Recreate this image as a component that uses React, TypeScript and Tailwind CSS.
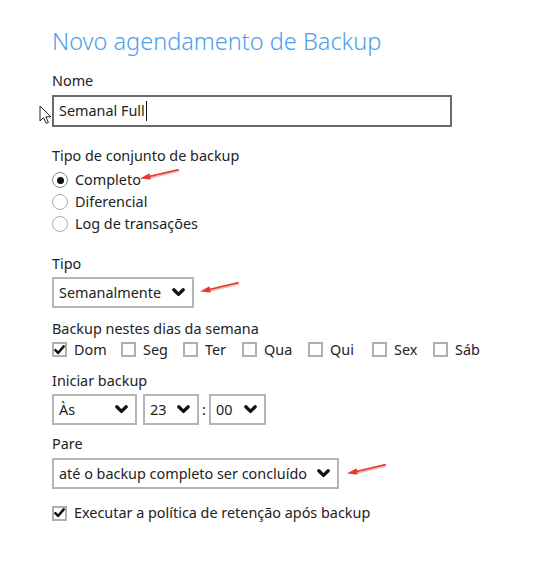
import { useState } from "react";

function Chevron() {
  return (
    <svg width="13" height="9" viewBox="0 0 13 9" className="shrink-0">
      <path d="M1.8 1.8 L6.5 6.4 L11.2 1.8" fill="none" stroke="#111" strokeWidth="3.3" strokeLinecap="round" strokeLinejoin="round" />
    </svg>
  );
}

function Select({ value, className }: { value: string; className: string }) {
  return (
    <div className={`h-[31px] border-2 border-[#b5b5b5] bg-white flex items-center justify-between pl-[5px] pr-[7px] ${className}`}>
      <span>{value}</span>
      <Chevron />
    </div>
  );
}

function CheckBox({ checked }: { checked: boolean }) {
  return (
    <span className="w-[15px] h-[15px] border-2 border-[#b0b0b0] bg-white flex items-center justify-center shrink-0">
      {checked && (
        <svg width="11" height="10" viewBox="0 0 11 10">
          <path d="M1.4 5.2 L4.1 8 L9.7 1.4" fill="none" stroke="#111" strokeWidth="2.5" strokeLinecap="round" strokeLinejoin="round" />
        </svg>
      )}
    </span>
  );
}

function Radio({ checked }: { checked: boolean }) {
  return (
    <span className={`w-[16px] h-[16px] rounded-full border-[1.5px] bg-white flex items-center justify-center shrink-0 ${checked ? "border-[#8a8a8a]" : "border-[#ababab]"}`}>
      {checked && <span className="w-[7px] h-[7px] rounded-full bg-[#111]" />}
    </span>
  );
}

function RedArrow({ className }: { className: string }) {
  return (
    <svg width="44" height="14" viewBox="0 0 44 14" className={`absolute ${className}`}>
      <path d="M40 2.5 L9 10" stroke="#f0b7b3" strokeWidth="3" strokeLinecap="round" />
      <path d="M40 1.8 L9 9" stroke="#e8382f" strokeWidth="1.6" strokeLinecap="round" />
      <path d="M2 10.6 L11.5 5.2 L12.8 11.6 Z" fill="#e8382f" />
    </svg>
  );
}

export default function App() {
  const [days] = useState([
    { name: "Dom", checked: true, w: "w-[69px]" },
    { name: "Seg", checked: false, w: "w-[62px]" },
    { name: "Ter", checked: false, w: "w-[59px]" },
    { name: "Qua", checked: false, w: "w-[66px]" },
    { name: "Qui", checked: false, w: "w-[64px]" },
    { name: "Sex", checked: false, w: "w-[61px]" },
    { name: "Sáb", checked: false, w: "w-[60px]" },
  ]);

  const types = ["Completo", "Diferencial", "Log de transações"];

  return (
    <div className="relative w-[533px] h-[575px] bg-white text-[#222] text-[14.4px] leading-[20px] font-['Noto_Sans','Open_Sans',sans-serif] pl-[52px] flex flex-col">
      <h1 className="mt-[26px] text-[23.5px] leading-[31px] font-light text-[#4e9ded]">Novo agendamento de Backup</h1>

      <label className="mt-[14px]">Nome</label>
      <div className="mt-[4px] w-[400px] h-[32px] border-2 border-[#6a6a6a] flex items-center pl-[5px]">
        <span>Semanal Full</span>
        <span className="w-px h-[20px] bg-[#111] ml-[1px]" />
      </div>

      <label className="mt-[19px]">Tipo de conjunto de backup</label>
      <div className="mt-[3px] flex flex-col">
        {types.map((t, i) => (
          <div key={t} className="h-[22px] flex items-center gap-[7px]">
            <Radio checked={i === 0} />
            <span>{t}</span>
          </div>
        ))}
      </div>

      <label className="mt-[19px]">Tipo</label>
      <Select value="Semanalmente" className="mt-[3px] w-[142px]" />

      <label className="mt-[11px]">Backup nestes dias da semana</label>
      <div className="mt-[3px] h-[15px] flex items-center">
        {days.map((d) => (
          <div key={d.name} className={`flex items-center gap-[7px] ${d.w}`}>
            <CheckBox checked={d.checked} />
            <span>{d.name}</span>
          </div>
        ))}
      </div>

      <label className="mt-[14px]">Iniciar backup</label>
      <div className="mt-[3px] flex items-center">
        <Select value="Às" className="w-[85px]" />
        <Select value="23" className="w-[56px] ml-[6px]" />
        <span className="w-[10px] text-center">:</span>
        <Select value="00" className="w-[57px]" />
      </div>

      <label className="mt-[9px]">Pare</label>
      <Select value="até o backup completo ser concluído" className="mt-[4px] w-[287px]" />

      <div className="mt-[16px] h-[16px] flex items-center gap-[7px]">
        <CheckBox checked={true} />
        <span>Executar a política de retenção após backup</span>
      </div>

      <RedArrow className="left-[138px] top-[168px]" />
      <RedArrow className="left-[198px] top-[281px]" />
      <RedArrow className="left-[345px] top-[463px]" />

      <svg width="14" height="20" viewBox="0 0 14 20" className="absolute left-[39px] top-[105px]">
        <path d="M1 1 L1 16 L4.6 12.6 L7.2 18.4 L9.4 17.4 L6.9 11.8 L11.8 11.8 Z" fill="#fff" stroke="#222" strokeWidth="1" strokeLinejoin="round" />
      </svg>
    </div>
  );
}
